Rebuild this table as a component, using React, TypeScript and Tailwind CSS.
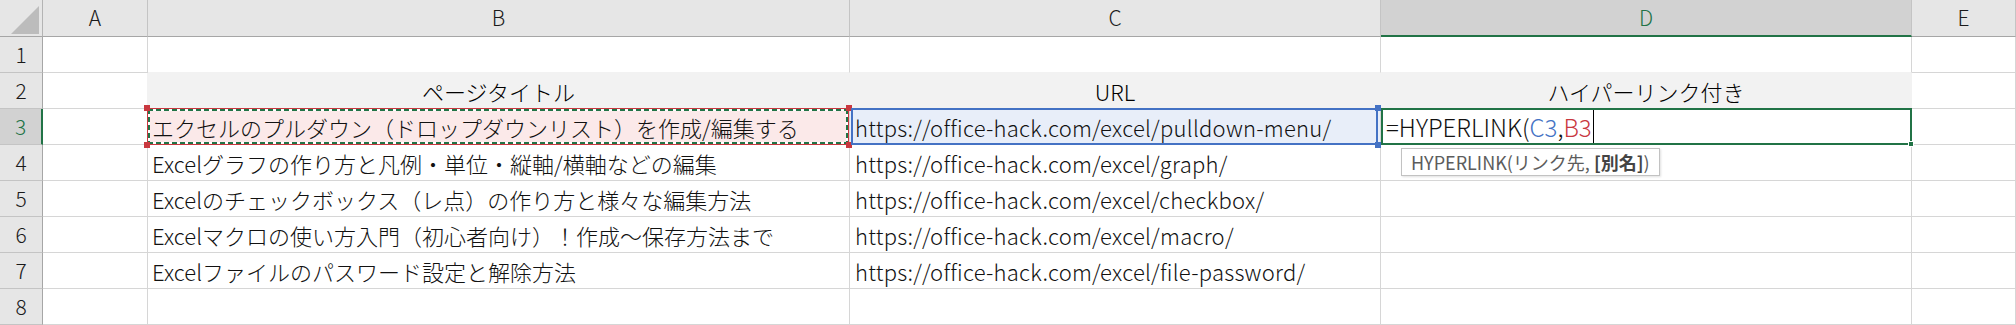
import React from "react";

const FONT = "font-['Noto_Sans_CJK_JP','Noto_Sans',sans-serif]";

const COLS = ["A", "B", "C", "D", "E"];

const titles = [
  "エクセルのプルダウン（ドロップダウンリスト）を作成/編集する",
  "Excelグラフの作り方と凡例・単位・縦軸/横軸などの編集",
  "Excelのチェックボックス（レ点）の作り方と様々な編集方法",
  "Excelマクロの使い方入門（初心者向け）！作成～保存方法まで",
  "Excelファイルのパスワード設定と解除方法",
];

const urls = [
  "https://office-hack.com/excel/pulldown-menu/",
  "https://office-hack.com/excel/graph/",
  "https://office-hack.com/excel/checkbox/",
  "https://office-hack.com/excel/macro/",
  "https://office-hack.com/excel/file-password/",
];

const cellBase =
  "flex items-center whitespace-nowrap text-[22px] font-light leading-none border-r border-b";

function Corner() {
  return (
    <div className="flex items-end justify-end bg-[#e6e6e6] border-r border-b border-r-[#b4b4b4] border-b-[#a6a6a6] pr-[3px] pb-[2px]">
      <svg width="28" height="28" viewBox="0 0 28 28">
        <polygon points="28,0 28,28 0,28" fill="#bcbcbc" />
      </svg>
    </div>
  );
}

function ColHead({ label, active }: { label: string; active?: boolean }) {
  return active ? (
    <div className="flex items-center justify-center bg-[#d2d2d2] text-[#217346] text-[21px] font-light border-r border-r-[#c4c4c4] border-b-2 border-b-[#217346]">
      {label}
    </div>
  ) : (
    <div className="flex items-center justify-center bg-[#e6e6e6] text-[#1a1a1a] text-[21px] font-light border-r border-r-[#c4c4c4] border-b border-b-[#a6a6a6]">
      {label}
    </div>
  );
}

function RowHead({ n, active }: { n: number; active?: boolean }) {
  return active ? (
    <div className="flex items-center justify-center bg-[#d2d2d2] text-[#217346] text-[21px] font-light border-r-2 border-r-[#217346] border-b border-b-[#c4c4c4]">
      {n}
    </div>
  ) : (
    <div className="flex items-center justify-center bg-[#e6e6e6] text-[#1a1a1a] text-[21px] font-light border-r border-r-[#a6a6a6] border-b border-b-[#c4c4c4]">
      {n}
    </div>
  );
}

function Blank({ className = "" }: { className?: string }) {
  return <div className={`${cellBase} border-[#d6d6d6] ${className}`} />;
}

// Handle squares drawn on the corners of a range reference
function Handles({ color }: { color: string }) {
  return (
    <>
      <span className={`absolute -left-[4px] -top-[4px] w-[6px] h-[6px] ${color}`} />
      <span className={`absolute -right-[4px] -top-[4px] w-[6px] h-[6px] ${color}`} />
      <span className={`absolute -left-[4px] -bottom-[4px] w-[6px] h-[6px] ${color}`} />
      <span className={`absolute -right-[4px] -bottom-[4px] w-[6px] h-[6px] ${color}`} />
    </>
  );
}

function TitleCell() {
  return (
    <div className={`${cellBase} relative border-[#d6d6d6] bg-[#fbe9e9] pl-[4px]`}>
      <span className="text-[#111]">{titles[0]}</span>
      {/* B3 reference highlight with copy marquee */}
      <div className="absolute -left-px -top-px right-0 -bottom-px border border-[#c9383f] z-10">
        <div className="absolute left-0 right-0 top-0 h-[2px] bg-[image:repeating-linear-gradient(90deg,#217346_0px,#217346_5px,#ffffff_5px,#ffffff_8px)]" />
        <div className="absolute left-0 right-0 bottom-0 h-[2px] bg-[image:repeating-linear-gradient(90deg,#217346_0px,#217346_5px,#ffffff_5px,#ffffff_8px)]" />
        <div className="absolute top-0 bottom-0 left-0 w-[2px] bg-[image:repeating-linear-gradient(180deg,#217346_0px,#217346_5px,#ffffff_5px,#ffffff_8px)]" />
        <div className="absolute top-0 bottom-0 right-0 w-[2px] bg-[image:repeating-linear-gradient(180deg,#217346_0px,#217346_5px,#ffffff_5px,#ffffff_8px)]" />
        <Handles color="bg-[#c9383f]" />
      </div>
    </div>
  );
}

function UrlRefCell() {
  return (
    <div className={`${cellBase} relative border-[#d6d6d6] bg-[#e8eef9] pl-[5px]`}>
      <span className="text-[#111] tracking-[0.25px]">{urls[0]}</span>
      {/* C3 reference highlight */}
      <div className="absolute left-[1px] -top-px right-[2px] -bottom-px border-2 border-[#4472c4] z-10">
        <span className="absolute -right-[5px] -top-[5px] w-[6px] h-[6px] bg-[#4472c4]" />
        <span className="absolute -right-[5px] -bottom-[5px] w-[6px] h-[6px] bg-[#4472c4]" />
      </div>
    </div>
  );
}

function FormulaCell() {
  return (
    <div className={`${cellBase} relative border-[#d6d6d6] pl-[5px]`}>
      <span className="text-[24px] text-[#111] flex items-center">
        =HYPERLINK(<span className="text-[#4472c4]">C3</span>,
        <span className="text-[#c9383f]">B3</span>
        <span className="inline-block w-px h-[35px] bg-black ml-[1px]" />
      </span>
      {/* active cell frame */}
      <div className="absolute left-0 -top-px -right-px -bottom-px border-2 border-[#217346] z-10">
        <span className="absolute -right-[4px] -bottom-[4px] w-[6px] h-[6px] bg-[#217346] border border-white" />
      </div>
      {/* function argument tip */}
      <div className="absolute left-[20px] top-[39px] h-[28px] px-[9px] flex items-center bg-white border border-[#c2c2c2] shadow-[1px_1px_2px_rgba(0,0,0,0.12)] z-20 text-[18px] font-normal text-[#5c5c5c] whitespace-nowrap">
        HYPERLINK(リンク先,&nbsp;<span className="font-bold text-[#444]">[別名]</span>)
      </div>
    </div>
  );
}

export default function App() {
  const body: React.ReactNode[] = [];

  for (let r = 1; r <= 8; r++) {
    body.push(<RowHead key={`h${r}`} n={r} active={r === 3} />);

    if (r === 1) {
      body.push(<Blank key="a1" />);
      body.push(<Blank key="b1" className="border-b-[#f2f2f2]" />);
      body.push(<Blank key="c1" className="border-b-[#f2f2f2]" />);
      body.push(<Blank key="d1" className="border-b-[#f2f2f2]" />);
      body.push(<Blank key="e1" />);
    } else if (r === 2) {
      body.push(<Blank key="a2" className="border-r-[#f2f2f2]" />);
      body.push(
        <div key="b2" className={`${cellBase} justify-center bg-[#f2f2f2] border-[#f2f2f2]`}>
          ページタイトル
        </div>
      );
      body.push(
        <div key="c2" className={`${cellBase} justify-center bg-[#f2f2f2] border-[#f2f2f2]`}>
          URL
        </div>
      );
      body.push(
        <div key="d2" className={`${cellBase} justify-center bg-[#f2f2f2] border-[#f2f2f2]`}>
          ハイパーリンク付き
        </div>
      );
      body.push(<Blank key="e2" />);
    } else if (r === 3) {
      body.push(<Blank key="a3" />);
      body.push(<TitleCell key="b3" />);
      body.push(<UrlRefCell key="c3" />);
      body.push(<FormulaCell key="d3" />);
      body.push(<Blank key="e3" />);
    } else if (r <= 7) {
      const i = r - 3;
      body.push(<Blank key={`a${r}`} />);
      body.push(
        <div key={`b${r}`} className={`${cellBase} border-[#d6d6d6] pl-[4px] text-[#111]`}>
          {titles[i]}
        </div>
      );
      body.push(
        <div key={`c${r}`} className={`${cellBase} border-[#d6d6d6] pl-[5px] text-[#111] tracking-[0.25px]`}>
          {urls[i]}
        </div>
      );
      body.push(<Blank key={`d${r}`} />);
      body.push(<Blank key={`e${r}`} />);
    } else {
      body.push(<Blank key={`a${r}`} />);
      body.push(<Blank key={`b${r}`} />);
      body.push(<Blank key={`c${r}`} />);
      body.push(<Blank key={`d${r}`} />);
      body.push(<Blank key={`e${r}`} />);
    }
  }

  return (
    <div className={`${FONT} w-[2016px] h-[325px] overflow-hidden bg-white text-black`}>
      <div className="grid grid-cols-[43px_105px_702px_531px_531px_104px] grid-rows-[37px_repeat(8,36px)]">
        <Corner />
        {COLS.map((c) => (
          <ColHead key={c} label={c} active={c === "D"} />
        ))}
        {body}
      </div>
    </div>
  );
}
